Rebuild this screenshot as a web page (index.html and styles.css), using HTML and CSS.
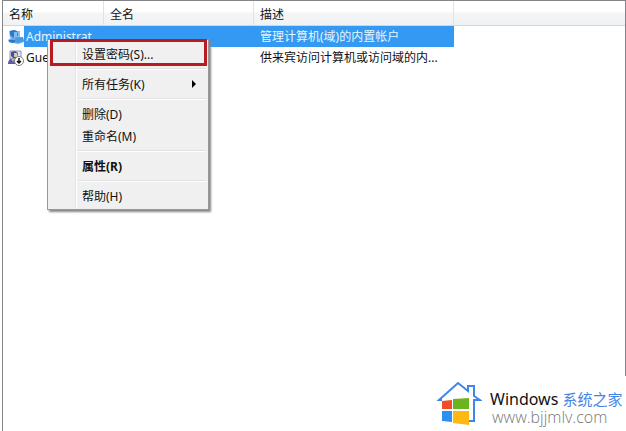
FILE: index.html
```html
<!DOCTYPE html>
<html lang="zh-CN">
<head>
<meta charset="utf-8">
<title>本地用户和组</title>
<link rel="stylesheet" href="styles.css">
</head>
<body>
<main class="pane">
  <table class="users">
    <colgroup><col class="col-name"><col class="col-full"><col class="col-desc"><col></colgroup>
    <thead>
      <tr><th>名称</th><th>全名</th><th>描述</th><th></th></tr>
    </thead>
    <tbody>
      <tr class="selected">
        <td class="name-cell"><div class="name">
          <svg class="icon" viewBox="0 0 16 16" aria-hidden="true">
            <path d="M1 2H12V9H2Z" fill="#7fbcf0"/>
            <path d="M2 2Q6 0 9 2L10 6 8 9H5L2 6Z" fill="#2f78c2"/>
            <path d="M6 3 9 3 9 8 6 8Z" fill="#7cbcf0"/>
            <path d="M0 11 5 8 15 8 16 13 10 15 1 13Z" fill="#62aaea"/>
            <path d="M8 9 15 8 16 12 10 14 7 12Z" fill="#4a97e2"/>
            <path d="M1 11H6L8 12 5 14 1 13Z" fill="#2f74bd"/>
          </svg>
          <span class="label">Administrat</span></div></td>
        <td></td><td>管理计算机(域)的内置帐户</td><td></td>
      </tr>
      <tr>
        <td class="name-cell"><div class="name">
          <svg class="icon" viewBox="0 0 16 16" aria-hidden="true">
            <path d="M2 1H13V9H2Z" fill="#dfe5f4" stroke="#8b93b4"/>
            <path d="M3 2 7 1 10 3 9 8 5 8 3 6Z" fill="#4350a0"/>
            <path d="M6 3 9 3 9 7 6 7Z" fill="#e6c8a0"/>
            <path d="M0 13Q1 8 5 8L9 10V14H0Z" fill="#6257ae"/>
            <path d="M3 8 6 9 5 12Z" fill="#e4d36a"/>
            <circle cx="11" cy="11" r="4.500" fill="#fff" stroke="#77808c"/>
            <path d="M11 8V13M9 11 11 13 13 11" fill="none" stroke="#111" stroke-width="1.500"/>
          </svg>
          <span class="label">Guest</span></div></td>
        <td></td><td>供来宾访问计算机或访问域的内...</td><td></td>
      </tr>
    </tbody>
  </table>
  <div class="menu" role="menu">
    <button class="item marked" role="menuitem">设置密码(S)...</button>
    <hr>
    <button class="item" role="menuitem">所有任务(K)<svg class="arrow" viewBox="0 0 4 8" aria-hidden="true"><path d="M0 0 4 4 0 8Z"/></svg></button>
    <hr>
    <button class="item" role="menuitem">删除(D)</button>
    <button class="item" role="menuitem">重命名(M)</button>
    <hr>
    <button class="item default" role="menuitem">属性(R)</button>
    <hr>
    <button class="item" role="menuitem">帮助(H)</button>
  </div>
</main>
<footer class="brand">
  <svg class="logo" viewBox="0 0 48 48" aria-hidden="true">
    <path d="M8 20H5L24 3 34 11V6H40V16L46 20H40V41H35" fill="none" stroke="#3f86e8" stroke-width="2"/>
    <path d="M8 21 18 20V29H8Z" fill="#ef4e28"/>
    <path d="M19 19 35 18V29H19Z" fill="#6cb41e"/>
    <path d="M8 31H18V42L8 41Z" fill="#2b91ee"/>
    <path d="M19 31H35V45L19 43Z" fill="#fdb813"/>
  </svg>
  <div class="brand-text">
    <div class="brand-name">Windows <span class="brand-cn">系统之家</span></div>
    <div class="brand-url">www.bjjmlv.com</div>
  </div>
</footer>
</body>
</html>
```
FILE: styles.css
```css
* { box-sizing: border-box; }

body {
  margin: 0;
  min-height: 100vh;
  display: flex;
  flex-direction: column;
  background: #fff;
  color: #111;
  font: 12px/21px "Noto Sans", "Noto Sans CJK SC", sans-serif;
  border-left: 2px solid #fff;
  position: relative;
}

.pane {
  flex: 1;
  position: relative;
  border: 1px solid #858589;
  border-bottom: 0;
}

.users {
  width: 100%;
  table-layout: fixed;
  border-collapse: separate;
  border-spacing: 0;
}

.col-name { width: 101px; }
.col-full { width: 150px; }
.col-desc { width: 200px; }

th, td {
  padding: 0 0 0 6px;
  height: 21px;
  text-align: left;
  font-weight: normal;
  white-space: nowrap;
  overflow: hidden;
}

th {
  height: 25px;
  padding-top: 2px;
  border-right: 1px solid #dfe2e6;
  border-bottom: 1px solid #d5d5d5;
  background: linear-gradient(#fff 45%, #f4f5f6 50%, #f1f2f3);
}

th:last-child { border-right: 0; }

td.name-cell { padding: 0; }

.name {
  display: flex;
  align-items: center;
  padding-left: 5px;
}

.icon {
  flex: none;
  width: 16px;
  height: 16px;
}

.label {
  flex: 1;
  padding-left: 2px;
}

.selected td:not(:last-child):not(.name-cell),
.selected .label {
  background: #3399f3;
  color: #e4f6ff;
}

.menu {
  position: absolute;
  left: 44px;
  top: 38px;
  width: 162px;
  padding: 3px 2px 2px;
  border: 1px solid #979797;
  background: linear-gradient(90deg, #f0f0f0 27px, #e2e3e3 27px, #e2e3e3 28px, #fff 28px, #fff 29px, #f0f0f0 29px);
  box-shadow: 2px 2px 2px #888;
}

.menu hr {
  height: 2px;
  margin: 3px 0 3px 28px;
  border: 0;
  border-top: 1px solid #e0e0e0;
  background: #fff;
}

.item {
  display: flex;
  align-items: center;
  justify-content: space-between;
  position: relative;
  width: 100%;
  height: 22px;
  padding: 0 10px 0 32px;
  border: 0;
  background: none;
  color: #111;
  font: inherit;
  text-align: left;
}

.default { font-weight: bold; }

.marked::after {
  content: "";
  position: absolute;
  inset: -4px -1px -1px 0;
  border: 3px solid #b81c22;
}

.arrow {
  width: 4px;
  height: 8px;
}

.brand {
  position: absolute;
  right: 0;
  bottom: 0;
  display: flex;
  align-items: center;
  width: 192px;
  height: 55px;
  background: #fff;
}

.logo {
  flex: none;
  width: 48px;
  height: 48px;
  margin-right: 8px;
}

.brand-text { padding-top: 8px; }

.brand-name {
  color: #111;
  font-size: 16px;
  line-height: 18px;
  white-space: nowrap;
}

.brand-cn {
  color: #3f86e8;
  font-size: 15px;
}

.brand-url {
  padding-left: 2px;
  color: #777;
  font-family: "Open Sans", sans-serif;
  font-weight: 300;
  font-size: 16px;
  line-height: 18px;
}
```
